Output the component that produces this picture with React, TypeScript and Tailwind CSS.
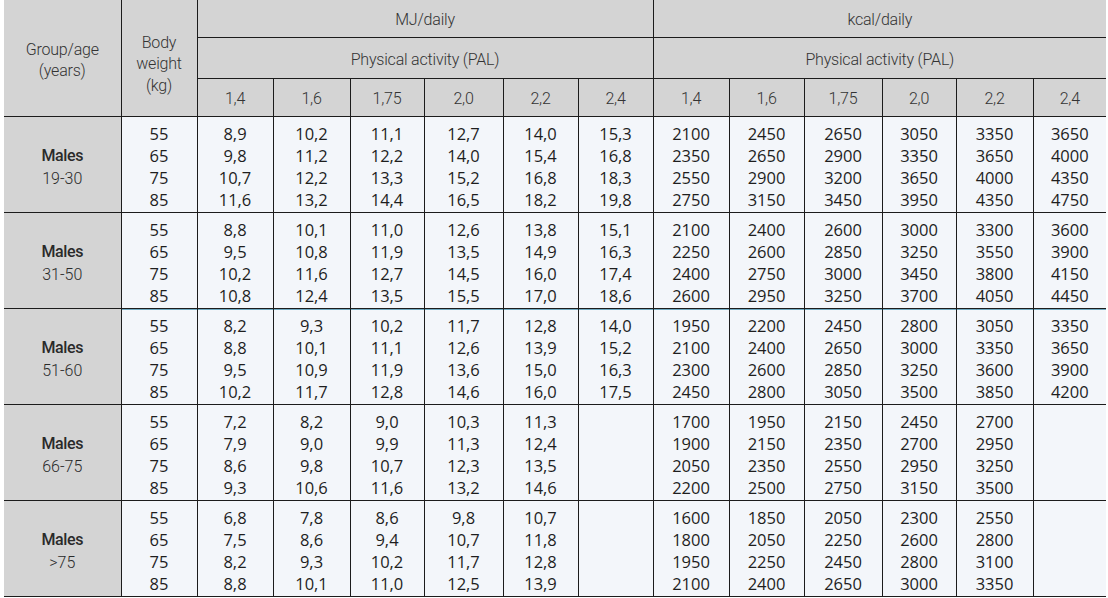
const mj = [
  ['8,9|9,8|10,7|11,6', '10,2|11,2|12,2|13,2', '11,1|12,2|13,3|14,4', '12,7|14,0|15,2|16,5', '14,0|15,4|16,8|18,2', '15,3|16,8|18,3|19,8'],
  ['8,8|9,5|10,2|10,8', '10,1|10,8|11,6|12,4', '11,0|11,9|12,7|13,5', '12,6|13,5|14,5|15,5', '13,8|14,9|16,0|17,0', '15,1|16,3|17,4|18,6'],
  ['8,2|8,8|9,5|10,2', '9,3|10,1|10,9|11,7', '10,2|11,1|11,9|12,8', '11,7|12,6|13,6|14,6', '12,8|13,9|15,0|16,0', '14,0|15,2|16,3|17,5'],
  ['7,2|7,9|8,6|9,3', '8,2|9,0|9,8|10,6', '9,0|9,9|10,7|11,6', '10,3|11,3|12,3|13,2', '11,3|12,4|13,5|14,6', ''],
  ['6,8|7,5|8,2|8,8', '7,8|8,6|9,3|10,1', '8,6|9,4|10,2|11,0', '9,8|10,7|11,7|12,5', '10,7|11,8|12,8|13,9', ''],
]

const kcal = [
  ['2100|2350|2550|2750', '2450|2650|2900|3150', '2650|2900|3200|3450', '3050|3350|3650|3950', '3350|3650|4000|4350', '3650|4000|4350|4750'],
  ['2100|2250|2400|2600', '2400|2600|2750|2950', '2600|2850|3000|3250', '3000|3250|3450|3700', '3300|3550|3800|4050', '3600|3900|4150|4450'],
  ['1950|2100|2300|2450', '2200|2400|2600|2800', '2450|2650|2850|3050', '2800|3000|3250|3500', '3050|3350|3600|3850', '3350|3650|3900|4200'],
  ['1700|1900|2050|2200', '1950|2150|2350|2500', '2150|2350|2550|2750', '2450|2700|2950|3150', '2700|2950|3250|3500', ''],
  ['1600|1800|1950|2100', '1850|2050|2250|2400', '2050|2250|2450|2650', '2300|2600|2800|3000', '2550|2800|3100|3350', ''],
]

const groups = ['19-30', '31-50', '51-60', '66-75', '>75']
const pal = ['1,4', '1,6', '1,75', '2,0', '2,2', '2,4']
const widths = [117, 76, 76, 77, 74, 79, 75, 75, 76, 75, 78, 74, 77, 73]

const head = "font-['Roboto',sans-serif] font-light text-[16px] tracking-[-0.2px] text-[#333] text-center"
const cell = "bg-[#f3f6fa] border-b border-[#1c1c1c] text-center align-middle font-['Open_Sans',sans-serif] text-[16.5px] leading-[22px] text-[#1e1e1e] pt-[6px]"

function Lines({ v }: { v: string }) {
  if (!v) return null
  return (
    <>
      {v.split('|').map((x, i) => (
        <div key={i}>{x}</div>
      ))}
    </>
  )
}

export default function App() {
  return (
    <div className="w-[1108px] h-[598px] bg-white overflow-hidden pl-[4px]">
      <table className="table-fixed border-collapse w-[1102px]">
        <colgroup>
          {widths.map((w, i) => (
            <col key={i} style={{ width: w }} />
          ))}
        </colgroup>
        <thead className="bg-[#d4d4d4]">
          <tr className="h-[37px]">
            <th rowSpan={3} className={`${head} leading-[21px] border-r border-b border-[#1c1c1c] pt-1`}>
              Group/age<br />(years)
            </th>
            <th rowSpan={3} className={`${head} leading-[21.5px] border-r border-b border-[#1c1c1c] pt-3`}>
              Body<br />weight<br />(kg)
            </th>
            <th colSpan={6} className={`${head} pt-[3px] border-r border-b border-[#1c1c1c]`}>MJ/daily</th>
            <th colSpan={6} className={`${head} pt-[3px] border-b border-[#1c1c1c]`}>kcal/daily</th>
          </tr>
          <tr className="h-[41px]">
            <th colSpan={6} className={`${head} pt-1 border-r border-b border-[#1c1c1c]`}>Physical activity (PAL)</th>
            <th colSpan={6} className={`${head} pt-1 border-b border-[#1c1c1c]`}>Physical activity (PAL)</th>
          </tr>
          <tr className="h-[38px]">
            {[...pal, ...pal].map((p, i) => (
              <th key={i} className={`${head} pt-[4px] border-b border-[#1c1c1c] ${i < 11 ? 'border-r' : ''}`}>
                {p}
              </th>
            ))}
          </tr>
        </thead>
        <tbody>
          {groups.map((g, gi) => {
            const extra = gi === 2 ? 'shadow-[inset_0_1px_0_#6fa9c0]' : ''
            return (
              <tr key={g} className="h-[96px]">
                <td className="bg-[#d4d4d4] border-r border-b border-[#1c1c1c] text-center align-middle font-['Roboto',sans-serif] text-[16px] leading-[23px] text-[#2a2a2a] pt-[6px]">
                  <div className="font-medium tracking-[-0.4px]">Males</div>
                  <div className="font-light">{g}</div>
                </td>
                <td className={`${cell} border-r ${extra}`}>
                  <Lines v="55|65|75|85" />
                </td>
                {[...mj[gi], ...kcal[gi]].map((v, i) => (
                  <td key={i} className={`${cell} ${i < 11 ? 'border-r' : ''} ${extra}`}>
                    <Lines v={v} />
                  </td>
                ))}
              </tr>
            )
          })}
        </tbody>
      </table>
    </div>
  )
}
